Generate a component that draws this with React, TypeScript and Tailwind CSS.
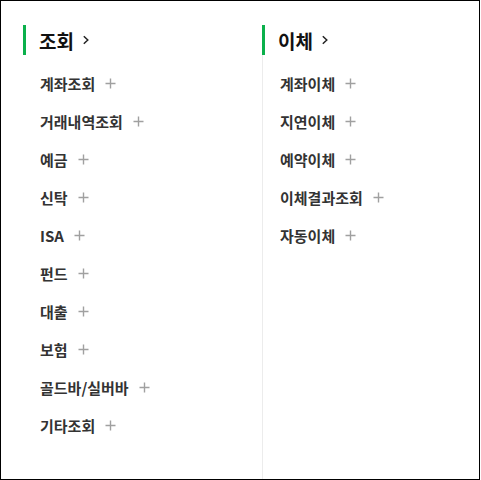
import React from "react";

const Plus = () => (
  <svg width="11" height="11" viewBox="0 0 11 11" className="shrink-0">
    <path d="M5.5 0.5V10.5M0.5 5.5H10.5" stroke="#a0a0a0" strokeWidth="1.4" fill="none" />
  </svg>
);

const Chevron = () => (
  <svg width="8" height="10" viewBox="0 0 8 10" className="shrink-0">
    <path d="M1.8 1.2L5.8 5L1.8 8.8" stroke="#222" strokeWidth="1.5" fill="none" />
  </svg>
);

const Heading = ({ title, shift }: { title: string; shift?: boolean }) => (
  <div
    className={`flex h-[30px] items-center gap-[8px] border-l-[3px] border-[#0bb04b] pl-[13px] ${shift ? "-ml-px" : ""}`}
  >
    <span className="text-[19px] font-bold leading-none text-[#111]">{title}</span>
    <Chevron />
  </div>
);

const Item = ({ label }: { label: string }) => (
  <li className="flex h-[38px] items-center gap-[10px] pl-[17px]">
    <span className="text-[15px] font-semibold leading-none text-[#333]">{label}</span>
    <Plus />
  </li>
);

export default function App() {
  const left = ["계좌조회", "거래내역조회", "예금", "신탁", "ISA", "펀드", "대출", "보험", "골드바/실버바", "기타조회"];
  const right = ["계좌이체", "지연이체", "예약이체", "이체결과조회", "자동이체"];
  return (
    <div
      className="flex h-[480px] w-[480px] border border-black bg-white"
      style={{ fontFamily: '"Noto Sans CJK KR", "Noto Sans", sans-serif' }}
    >
      <div className="w-[261px] pl-[22px] pt-[24px]">
        <Heading title="조회" />
        <ul className="mt-[9px]">
          {left.map((l) => (
            <Item key={l} label={l} />
          ))}
        </ul>
      </div>
      <div className="mt-[24px] flex-1 border-l border-[#ececec]">
        <Heading title="이체" shift />
        <ul className="mt-[9px]">
          {right.map((l) => (
            <Item key={l} label={l} />
          ))}
        </ul>
      </div>
    </div>
  );
}
